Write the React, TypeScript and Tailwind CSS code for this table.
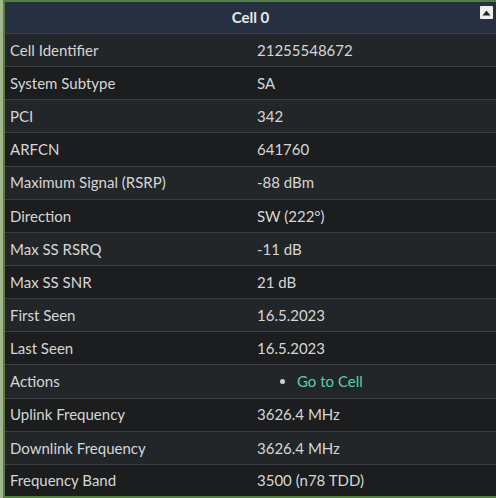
import React from "react";

const rows: [string, string | null][] = [
  ["Cell Identifier", "21255548672"],
  ["System Subtype", "SA"],
  ["PCI", "342"],
  ["ARFCN", "641760"],
  ["Maximum Signal (RSRP)", "-88 dBm"],
  ["Direction", "SW (222°)"],
  ["Max SS RSRQ", "-11 dB"],
  ["Max SS SNR", "21 dB"],
  ["First Seen", "16.5.2023"],
  ["Last Seen", "16.5.2023"],
  ["Actions", null],
  ["Uplink Frequency", "3626.4 MHz"],
  ["Downlink Frequency", "3626.4 MHz"],
  ["Frequency Band", "3500 (n78 TDD)"],
];

export default function App() {
  return (
    <div
      className="w-[496px] h-[498px] bg-[#a3b48f] pl-[3px] overflow-hidden"
      style={{ fontFamily: "Lato, 'Open Sans', sans-serif" }}
    >
      <div className="h-full border-l-2 border-t-2 border-b-2 border-[#557f42] bg-[#1c1e20] flex flex-col">
        <div className="h-[31px] shrink-0 bg-[#273041] flex items-center justify-center relative">
          <span className="text-[15px] font-bold text-[#e8e8e8]">Cell 0</span>
          <div className="absolute right-[3px] top-[4px] w-[13px] h-[13px] bg-[#eeeeee] rounded-[1px] flex items-center justify-center">
            <svg width="9" height="6" viewBox="0 0 9 6">
              <path d="M4.5 0.5 L8.5 5.5 L0.5 5.5 Z" fill="#1f2530" />
            </svg>
          </div>
        </div>
        {rows.map(([label, value], i) => (
          <div
            key={label}
            className={`${i === rows.length - 1 ? "flex-1" : "h-[33.15px] shrink-0"} border-t border-[#3b3f44] grid grid-cols-[247px_1fr] items-center text-[15px] text-[#d6d6d6] ${
              i % 2 === 0 ? "bg-[#222629]" : "bg-[#1b1d1f]"
            }`}
          >
            <div className="px-[5px] whitespace-nowrap">{label}</div>
            <div className="px-[5px] whitespace-nowrap">
              {value !== null ? (
                value
              ) : (
                <ul className="list-disc pl-[40px] marker:text-[#cfcfcf]">
                  <li className="text-[#5ccfa8]">Go to Cell</li>
                </ul>
              )}
            </div>
          </div>
        ))}
      </div>
    </div>
  );
}
